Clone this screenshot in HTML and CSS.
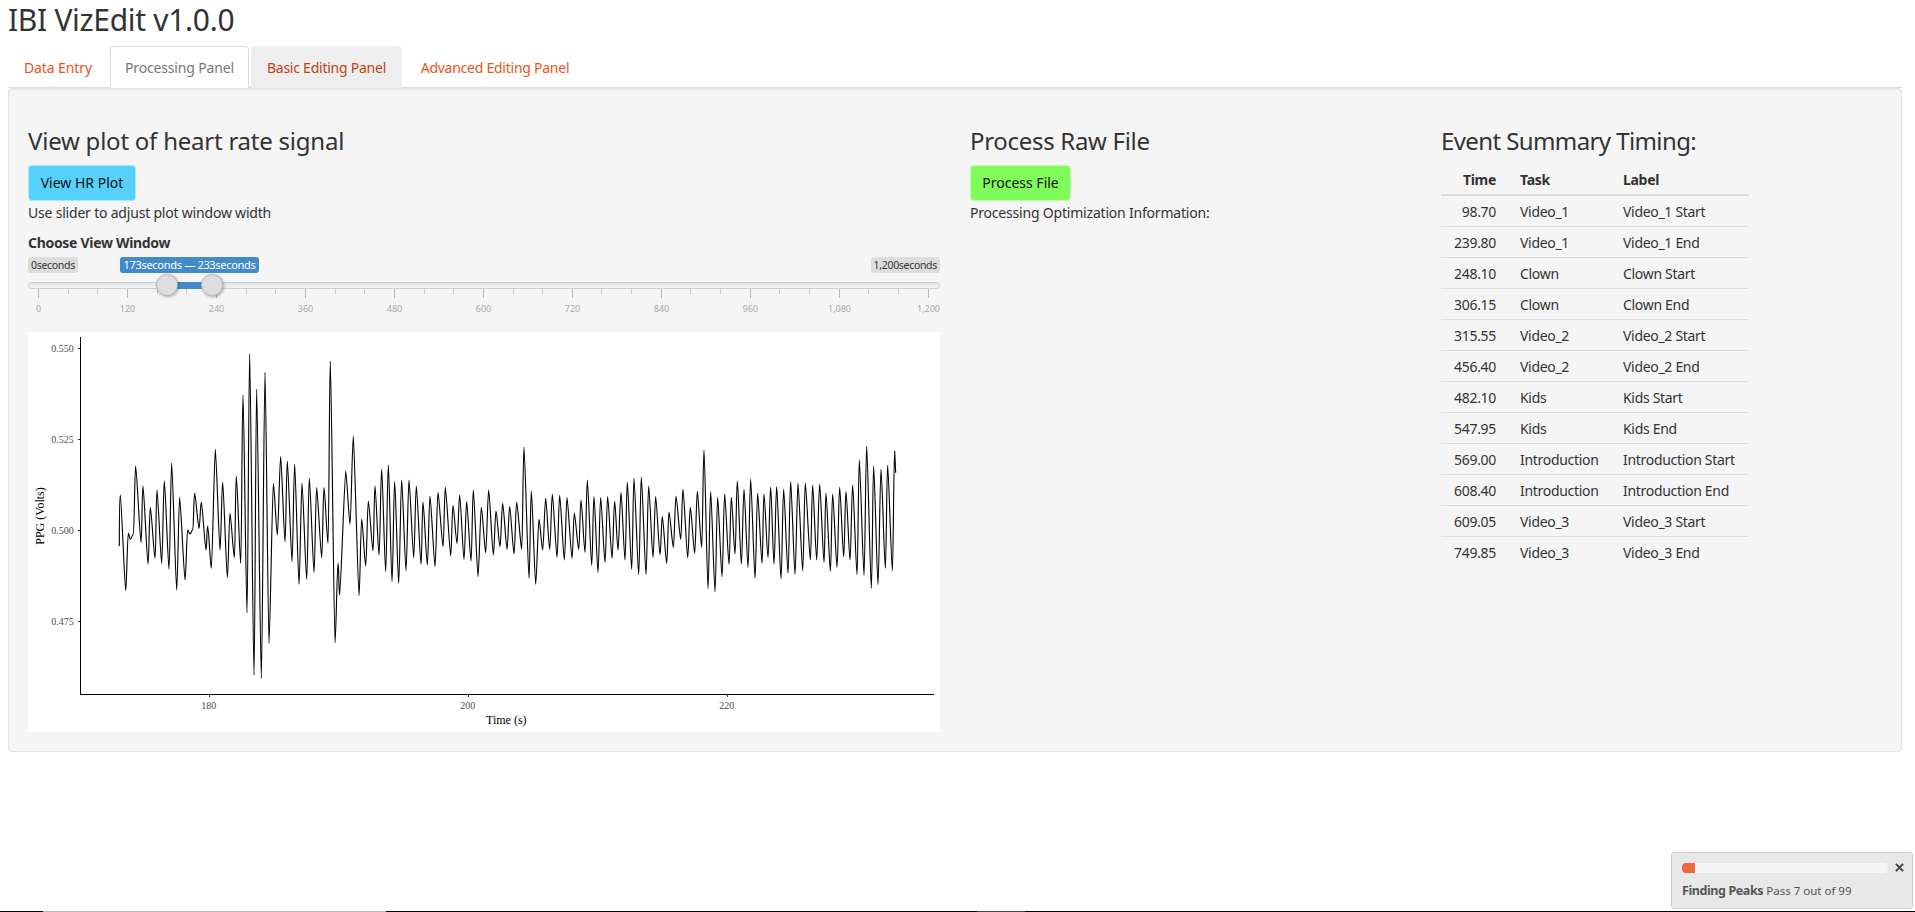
FILE: index.html
```html
<!DOCTYPE html>
<html lang="en">
<head>
<meta charset="utf-8">
<title>IBI VizEdit v1.0.0</title>
<link rel="stylesheet" href="styles.css">
</head>
<body>
<div class="page">
  <h2 class="app-title">IBI VizEdit v1.0.0</h2>
  <ul class="tabs">
    <li class="tab tab-data">Data Entry</li>
    <li class="tab tab-active">Processing Panel</li>
    <li class="tab tab-hover">Basic Editing Panel</li>
    <li class="tab tab-advanced">Advanced Editing Panel</li>
  </ul>
  <div class="well">
    <div class="columns">
      <section class="col">
        <h3 class="heading heading-wide">View plot of heart rate signal</h3>
        <button class="btn btn-blue">View HR Plot</button>
        <p class="note">Use slider to adjust plot window width</p>
        <label class="field-label">Choose View Window</label>
        <div class="slider">
          <div class="badges">
            <span class="badge">0seconds</span>
            <span class="badge">1,200seconds</span>
          </div>
          <span class="badge-range">173seconds — 233seconds</span>
          <div class="track">
            <div class="track-fill"></div>
            <div class="handle handle-a"></div>
            <div class="handle handle-b"></div>
          </div>
          <div class="ticks">
            <i class="major"></i><i></i><i></i><i class="major"></i><i></i><i></i><i class="major"></i><i></i><i></i><i class="major"></i><i></i><i></i><i class="major"></i><i></i><i></i><i class="major"></i><i></i><i></i><i class="major"></i><i></i><i></i><i class="major"></i><i></i><i></i><i class="major"></i><i></i><i></i><i class="major"></i><i></i><i></i><i class="major"></i>
          </div>
          <div class="tick-labels">
            <span>0</span><span>120</span><span>240</span><span>360</span><span>480</span><span>600</span><span>720</span><span>840</span><span>960</span><span>1,080</span><span>1,200</span>
          </div>
        </div>
        <svg class="plot" viewBox="24 6 2736 1200" role="img" aria-label="Heart rate signal plot">
          <path class="axis" d="M181 22V1093H2742"/>
          <path class="axis-tick" d="M173 56H181M173 328H181M173 602H181M173 875H181M568 1093V1102M1345 1093V1102M2122 1093V1102"/>
          <text class="tick-text" x="161" y="67" text-anchor="end">0.550</text>
          <text class="tick-text" x="161" y="339" text-anchor="end">0.525</text>
          <text class="tick-text" x="161" y="613" text-anchor="end">0.500</text>
          <text class="tick-text" x="161" y="886" text-anchor="end">0.475</text>
          <text class="tick-text" x="566" y="1136" text-anchor="middle">180</text>
          <text class="tick-text" x="1343" y="1136" text-anchor="middle">200</text>
          <text class="tick-text" x="2120" y="1136" text-anchor="middle">220</text>
          <text class="axis-title" x="1459" y="1183" text-anchor="middle">Time (s)</text>
          <text class="axis-title" x="0" y="0" text-anchor="middle" transform="translate(71 558) rotate(-90)">PPG (Volts)</text>
          <path class="signal" d="M298 648C298 560 298 495 301 495S314 782 317 782S322 610 325 610S328 628 331 628S337 612 340 612S344 408 347 408S360 638 363 638S366 468 369 468S381 703 384 703S388 532 391 532S402 685 405 685S408 480 411 480S422 700 425 700S430 453 433 453S444 718 447 718S452 400 455 400S467 780 470 780S476 502 479 502S492 750 495 750S500 600 503 600S507 612 510 612S515 600 518 600S521 490 524 490S534 595 537 595S541 516 544 516S555 660 558 660S560 588 563 588S571 715 574 715S583 358 586 358S597 660 600 660S605 456 608 456S619 743 622 743S627 550 630 550S640 683 643 683S646 438 649 438S659 700 662 700S666 195 669 195S678 848 681 848S686 72 689 72S699 1035 702 1035S707 178 710 178S721 1045 724 1045S732 127 735 127S744 940 747 940S757 460 760 460S769 615 772 615S779 380 782 380S792 635 795 635S799 393 802 393S813 695 816 695S821 403 824 403S834 763 837 763S843 460 846 460S857 748 860 748S865 445 868 445S879 727 882 727S887 473 890 473S902 683 905 683S909 473 912 473S921 640 924 640S928 93 931 93S942 938 945 938S951 700 954 700S956 795 959 795S974 423 977 423S987 583 990 583S997 318 1000 318S1014 797 1017 797S1022 567 1025 567S1034 708 1037 708S1042 513 1045 513S1056 662 1059 662S1062 468 1065 468S1074 675 1077 675S1082 418 1085 418S1094 725 1097 725S1102 405 1105 405S1113 755 1116 755S1121 455 1124 455S1133 760 1136 760S1142 450 1145 450S1155 722 1158 722S1164 450 1167 450S1178 683 1181 683S1186 468 1189 468S1200 703 1203 703S1206 516 1209 516S1219 705 1222 705S1227 498 1230 498S1242 710 1245 710S1251 487 1254 487S1266 650 1269 650S1273 472 1276 472S1289 677 1292 677S1296 527 1299 527S1308 640 1311 640S1316 495 1319 495S1329 688 1332 688S1337 515 1340 515S1350 693 1353 693S1357 480 1360 480S1371 740 1374 740S1381 532 1384 532S1394 668 1397 668S1403 480 1406 480S1417 675 1420 675S1425 543 1428 543S1437 650 1440 650S1445 520 1448 520S1458 658 1461 658S1466 530 1469 530S1479 672 1482 672S1487 516 1490 516S1502 658 1505 658S1509 352 1512 352S1524 745 1527 745S1531 484 1534 484S1544 763 1547 763S1554 568 1557 568S1565 660 1568 660S1574 505 1577 505S1586 658 1589 658S1594 493 1597 493S1608 682 1611 682S1616 496 1619 496S1630 690 1633 690S1638 503 1641 503S1653 685 1656 685S1660 550 1663 550S1673 658 1676 658S1680 510 1683 510S1692 667 1695 667S1699 450 1702 450S1712 706 1715 706S1719 500 1722 500S1731 727 1734 727S1739 503 1742 503S1752 697 1755 697S1760 500 1763 500S1773 685 1776 685S1781 514 1784 514S1791 660 1794 660S1800 488 1803 488S1812 690 1815 690S1819 457 1822 457S1832 718 1835 718S1839 445 1842 445S1853 734 1856 734S1861 442 1864 442S1875 734 1878 734S1883 468 1886 468S1896 682 1899 682S1904 500 1907 500S1917 674 1920 674S1924 560 1927 560S1937 700 1940 700S1944 546 1947 546S1957 652 1960 652S1965 498 1968 498S1979 628 1982 628S1986 478 1989 478S2000 683 2003 683S2008 532 2011 532S2021 670 2024 670S2029 485 2032 485S2042 652 2045 652S2049 360 2052 360S2061 775 2064 775S2069 485 2072 485S2082 785 2085 785S2090 502 2093 502S2103 740 2106 740S2111 492 2114 492S2124 703 2127 703S2131 502 2134 502S2142 672 2145 672S2149 453 2152 453S2161 702 2164 702S2169 478 2172 478S2181 712 2184 712S2189 448 2192 448S2202 745 2205 745S2210 490 2213 490S2223 700 2226 700S2229 492 2232 492S2241 683 2244 683S2249 472 2252 472S2259 702 2262 702S2267 470 2270 470S2280 746 2283 746S2288 478 2291 478S2301 730 2304 730S2309 455 2312 455S2322 733 2325 733S2331 460 2334 460S2345 722 2348 722S2353 460 2356 460S2368 690 2371 690S2375 466 2378 466S2387 690 2390 690S2396 462 2399 462S2409 697 2412 697S2415 490 2418 490S2428 724 2431 724S2435 492 2438 492S2448 712 2451 712S2456 472 2459 472S2468 680 2471 680S2475 485 2478 485S2487 690 2490 690S2495 465 2498 465S2508 734 2511 734S2515 390 2518 390S2529 736 2532 736S2537 348 2540 348S2551 775 2554 775S2558 408 2561 408S2571 764 2574 764S2580 418 2583 418S2593 715 2596 715S2600 406 2603 406S2614 722 2617 722S2621 363 2624 363L2627 428"/>
        </svg>
      </section>
      <section class="col">
        <h3 class="heading">Process Raw File</h3>
        <button class="btn btn-green">Process File</button>
        <p class="note">Processing Optimization Information:</p>
      </section>
      <section class="col">
        <h3 class="heading heading-tight">Event Summary Timing:</h3>
        <table class="events">
          <thead>
            <tr><th class="num">Time</th><th class="task">Task</th><th>Label</th></tr>
          </thead>
          <tbody>
            <tr><td class="num">98.70</td><td>Video_1</td><td>Video_1 Start</td></tr>
            <tr><td class="num">239.80</td><td>Video_1</td><td>Video_1 End</td></tr>
            <tr><td class="num">248.10</td><td>Clown</td><td>Clown Start</td></tr>
            <tr><td class="num">306.15</td><td>Clown</td><td>Clown End</td></tr>
            <tr><td class="num">315.55</td><td>Video_2</td><td>Video_2 Start</td></tr>
            <tr><td class="num">456.40</td><td>Video_2</td><td>Video_2 End</td></tr>
            <tr><td class="num">482.10</td><td>Kids</td><td>Kids Start</td></tr>
            <tr><td class="num">547.95</td><td>Kids</td><td>Kids End</td></tr>
            <tr><td class="num">569.00</td><td>Introduction</td><td>Introduction Start</td></tr>
            <tr><td class="num">608.40</td><td>Introduction</td><td>Introduction End</td></tr>
            <tr><td class="num">609.05</td><td>Video_3</td><td>Video_3 Start</td></tr>
            <tr><td class="num">749.85</td><td>Video_3</td><td>Video_3 End</td></tr>
          </tbody>
        </table>
      </section>
    </div>
  </div>
</div>
<div class="toast">
  <div class="toast-top">
    <div class="progress"><div class="progress-bar"></div></div>
    <svg class="close" viewBox="0 0 8 8" aria-label="Close"><path d="M.8.8 7.2 7.2M7.2.8.8 7.2"/></svg>
  </div>
  <div class="toast-text"><strong class="toast-title">Finding Peaks</strong> <span class="toast-detail">Pass 7 out of 99</span></div>
</div>
<div class="screen-edge"><i class="edge-black edge-a"></i><i class="edge-grey edge-b"></i><i class="edge-black edge-c"></i><i class="edge-dark edge-d"></i><i class="edge-black edge-e"></i></div>
</body>
</html>
```
FILE: styles.css
```css
* { box-sizing: border-box; }
html, body { margin: 0; height: 100%; overflow: hidden; background: #fff; }
body {
  font-family: "Noto Sans", "Open Sans", sans-serif;
  font-size: 14px;
  line-height: 20px;
  letter-spacing: -0.022em;
  color: #333;
}
.page { padding: 0 13px 0 8px; }
.app-title { margin: 3px 0 10px; font-size: 30px; line-height: 33px; font-weight: 400; }
.tabs { display: flex; margin: 0; padding: 0; list-style: none; border-bottom: 1px solid #ddd; height: 42px; }
.tab { height: 42px; margin-right: 2px; padding: 11px 0 0; border: 1px solid transparent; border-radius: 4px 4px 0 0; color: #e95420; text-align: center; white-space: nowrap; }
.tab-data { width: 100px; letter-spacing: -0.08px; }
.tab-active { width: 139px; letter-spacing: -0.15px; color: #777; background: #fff; border-color: #ddd #ddd #fff; }
.tab-hover { width: 151px; letter-spacing: -0.24px; color: #c34113; background: #eee; }
.tab-advanced { width: 182px; letter-spacing: -0.25px; }
.well { height: 664px; padding: 19px; background: #f5f5f5; border: 1px solid #e3e3e3; border-radius: 4px; box-shadow: inset 0 1px 1px rgba(0,0,0,.05); }
.columns { display: grid; grid-template-columns: 912px 441px 1fr; column-gap: 30px; }
.col { min-width: 0; }
.heading { margin: 20px 0 11px; font-size: 24px; line-height: 26px; font-weight: 400; }
.heading-wide { letter-spacing: -0.23px; }
.heading-tight { letter-spacing: -0.6px; }
.btn { display: block; height: 36px; padding: 0; border: 1px solid rgba(255,255,255,.5); border-radius: 4px; font: inherit; letter-spacing: 0; color: #111; }
.btn-blue { width: 108px; background: #56d1fb; }
.btn-green { width: 101px; background: #81fd5b; }
.note { margin: 2px 0 0; letter-spacing: -0.2px; }
.field-label { display: block; margin-top: 10px; font-weight: 700; }
.slider { position: relative; width: 912px; margin-top: 4px; height: 61px; }
.badges { display: flex; justify-content: space-between; height: 16px; }
.badge { padding: 0 3px; font-size: 10.5px; line-height: 16px; background: #ddd; border-radius: 3px; color: #333; }
.badge-range { position: absolute; left: 92px; top: 0; width: 139px; font-size: 11px; line-height: 16px; white-space: nowrap; text-align: center; color: #fff; background: #428bca; border-radius: 3px; }
.track { position: relative; margin-top: 9px; height: 7px; background: linear-gradient(#e2e2e2, #f4f4f4); border: 1px solid #cfcfcf; border-radius: 4px; }
.track-fill { position: absolute; left: 140px; width: 40px; top: -1px; bottom: -1px; background: #428bca; }
.handle { position: absolute; top: -9px; width: 22px; height: 22px; border-radius: 50%; background: #dedede; border: 1px solid #b9b9b9; box-shadow: 1px 1px 3px rgba(0,0,0,.3); }
.handle-a { left: 127px; }
.handle-b { left: 172px; }
.ticks { display: flex; justify-content: space-between; padding: 0 11px 0 10px; height: 9px; }
.ticks i { display: block; width: 1px; height: 5px; background: #c3cbd3; }
.ticks i.major { height: 9px; background: #a3bcd5; }
.tick-labels { display: flex; justify-content: space-between; padding: 0 11px 0 10px; margin-top: 4px; font-size: 9px; line-height: 14px; letter-spacing: 0; color: #a5a9ad; }
.tick-labels span { display: flex; justify-content: center; width: 1px; white-space: nowrap; }
.plot { display: block; width: 912px; height: 400px; margin-top: 14px; background: #fff; }
.axis { fill: none; stroke: #000; stroke-width: 3; shape-rendering: crispEdges; }
.axis-tick { fill: none; stroke: #333; stroke-width: 3; shape-rendering: crispEdges; }
.tick-text { font-family: "Liberation Serif", serif; font-size: 30px; letter-spacing: 0; fill: #4d4d4d; }
.axis-title { font-family: "Liberation Serif", serif; font-size: 36px; letter-spacing: 0; fill: #000; }
.signal { fill: none; stroke: #000; stroke-width: 3.4; stroke-linejoin: round; }
.events { width: 308px; border-collapse: collapse; table-layout: fixed; }
.events th, .events td { padding: 6px 12px 4px; line-height: 20px; text-align: left; }
.events th { font-weight: 700; padding-top: 5px; padding-bottom: 4px; border-bottom: 2px solid #ddd; }
.events td { border-top: 1px solid #ddd; }
.events tbody tr:first-child td { border-top: 0; }
.events .num { width: 67px; text-align: right; }
.events .task { width: 103px; }
.toast { position: fixed; left: 1671px; top: 852px; width: 242px; height: 57px; padding: 10px; background: #e8e8e8; border: 1px solid #ccc; border-radius: 3px; color: #555; }
.toast-top { display: flex; align-items: flex-start; justify-content: space-between; }
.progress { width: 206px; height: 10px; background: #f5f5f5; border-radius: 4px; overflow: hidden; }
.progress-bar { width: 13px; height: 10px; background: #ec6a40; }
.close { width: 9px; height: 9px; margin: 0 -2px 0 0; }
.close path { fill: none; stroke: #444; stroke-width: 1.8; }
.toast-text { margin-top: 8px; font-size: 13px; line-height: 18px; white-space: nowrap; }
.toast-title { font-size: 12.5px; letter-spacing: -0.4px; }
.toast-detail { font-size: 11.5px; letter-spacing: 0; }
.screen-edge { position: fixed; left: 0; right: 0; bottom: 0; height: 1px; display: flex; }
.screen-edge i { display: block; height: 1px; }
.edge-black { background: #000; }
.edge-grey { background: #b5b5b5; }
.edge-dark { background: #444; }
.edge-a { width: 43px; }
.edge-b { width: 343px; }
.edge-c { width: 591px; }
.edge-d { width: 48px; }
.edge-e { flex: 1; }
```
